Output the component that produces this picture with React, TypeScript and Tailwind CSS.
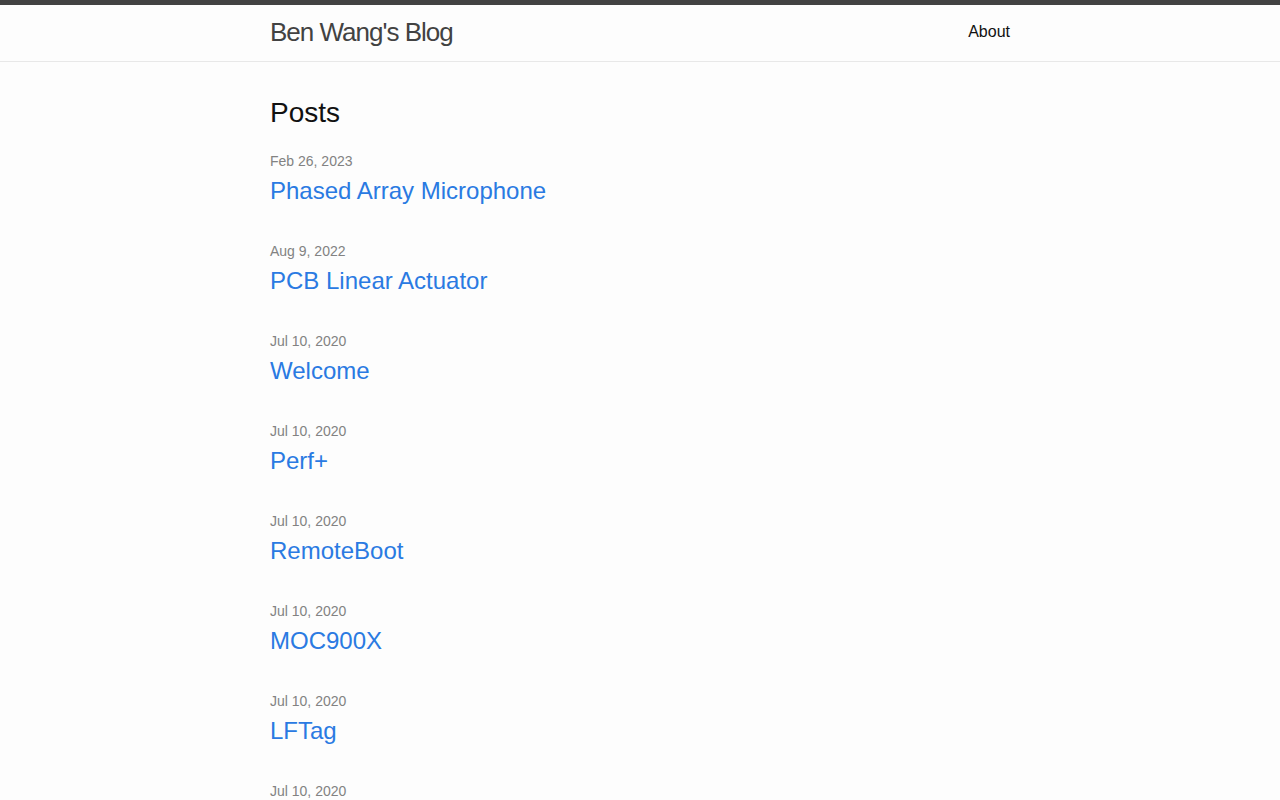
import React from "react";

const posts = [
  { date: "Feb 26, 2023", title: "Phased Array Microphone" },
  { date: "Aug 9, 2022", title: "PCB Linear Actuator" },
  { date: "Jul 10, 2020", title: "Welcome" },
  { date: "Jul 10, 2020", title: "Perf+" },
  { date: "Jul 10, 2020", title: "RemoteBoot" },
  { date: "Jul 10, 2020", title: "MOC900X" },
  { date: "Jul 10, 2020", title: "LFTag" },
];

export default function App() {
  return (
    <div
      className="min-h-[800px] bg-[#fdfdfd] text-[#111111] text-[16px] leading-[1.5]"
      style={{ fontFamily: '"Liberation Sans", Arial, Helvetica, sans-serif' }}
    >
      <header className="border-t-[5px] border-t-[#424242] border-b border-b-[#e8e8e8] min-h-[61.95px]">
        <div className="mx-auto max-w-[800px] px-[30px] flex justify-between items-start">
          <a className="text-[26px] font-light leading-[54px] tracking-[-1px] text-[#424242]">
            Ben Wang's Blog
          </a>
          <nav className="leading-[54px]">
            <a className="text-[#111111] leading-[1.5]">About</a>
          </nav>
        </div>
      </header>
      <main className="py-[30px]">
        <div className="mx-auto max-w-[800px] px-[30px]">
          <h2 className="text-[28px] leading-[42px] mb-[15px] font-normal">Posts</h2>
          <ul className="list-none m-0 p-0">
            {posts.map((p, i) => (
              <li key={i} className="mb-[30px]">
                <div className="leading-[24px]">
                  <span className="text-[14px] text-[#828282]">{p.date}</span>
                </div>
                <h3 className="text-[24px] leading-[36px] font-normal">
                  <a className="text-[#2a7ae2]">{p.title}</a>
                </h3>
              </li>
            ))}
            <li className="mb-[30px]">
              <div className="leading-[24px]">
                <span className="text-[14px] text-[#828282]">Jul 10, 2020</span>
              </div>
            </li>
          </ul>
        </div>
      </main>
    </div>
  );
}
